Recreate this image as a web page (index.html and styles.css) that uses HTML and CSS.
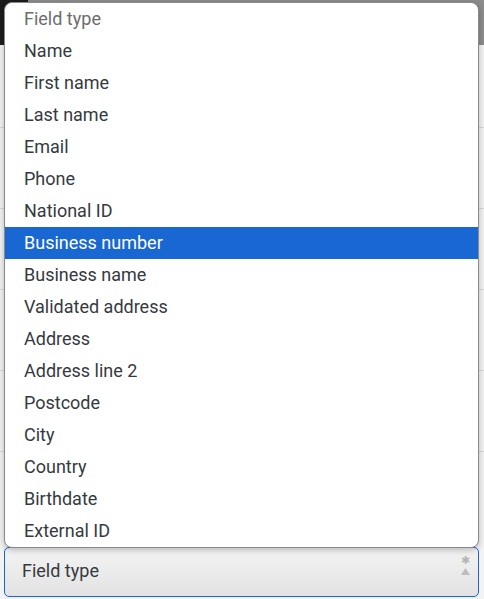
FILE: index.html
```html
<!DOCTYPE html>
<html lang="en">
<head>
    <meta charset="UTF-8">
    <meta name="viewport" content="width=device-width, initial-scale=1.0">
    <title>Field type</title>
    <link rel="stylesheet" href="styles.css">
</head>
<body>
    <div class="page">
        <div class="topbar">
            <div class="topbar-logo"></div>
        </div>
        <div class="rows">
            <div class="row"></div>
            <div class="row"></div>
            <div class="row"></div>
            <div class="row"></div>
            <div class="row"></div>
        </div>
        <div class="select">
            <span class="select-value">Field type</span>
            <span class="select-icons">
                <span class="required">&#10033;</span>
                <svg class="caret" width="9" height="7" viewBox="0 0 9 7"><path d="M4.5 0 L9 7 L0 7 Z" fill="#bdbdbd"/></svg>
            </span>
        </div>
    </div>

    <ul class="dropdown">
        <li class="option placeholder">Field type</li>
        <li class="option">Name</li>
        <li class="option">First name</li>
        <li class="option">Last name</li>
        <li class="option">Email</li>
        <li class="option">Phone</li>
        <li class="option">National ID</li>
        <li class="option selected">Business number</li>
        <li class="option">Business name</li>
        <li class="option">Validated address</li>
        <li class="option">Address</li>
        <li class="option">Address line 2</li>
        <li class="option">Postcode</li>
        <li class="option">City</li>
        <li class="option">Country</li>
        <li class="option">Birthdate</li>
        <li class="option">External ID</li>
    </ul>
</body>
</html>
```

FILE: styles.css
```css
* {
    margin: 0;
    padding: 0;
    box-sizing: border-box;
    font-family: Roboto, 'Liberation Sans', sans-serif;
}

body {
    width: 484px;
    height: 599px;
    overflow: hidden;
    background: #f3f3f3;
    position: relative;
}

.page {
    display: flex;
    flex-direction: column;
    height: 100%;
}

.topbar {
    height: 45px;
    background: #8c8c8c;
    display: flex;
}

.topbar-logo {
    width: 28px;
    height: 45px;
    background: #1c1c1c;
}

.rows {
    flex: 1;
    padding-top: 82px;
}

.row {
    height: 81px;
    border-top: 1px solid #d9d9d9;
}

.select {
    margin: 0 5px 2px 4px;
    height: 50px;
    border: 1px solid #1a66d9;
    border-radius: 5px;
    background: linear-gradient(#f4f4f4, #e2e2e2);
    display: flex;
    align-items: center;
    justify-content: space-between;
    padding: 0 8px 3px 17px;
}

.select-value {
    font-size: 18px;
    color: #353a40;
}

.select-icons {
    display: flex;
    flex-direction: column;
    align-items: center;
    gap: 2px;
    margin-top: -10px;
}

.required {
    font-size: 11px;
    line-height: 10px;
    color: #b5b5b5;
}

/* open list of the select */
.dropdown {
    position: absolute;
    top: 2px;
    left: 4px;
    width: 475px;
    list-style: none;
    background: #fff;
    border: 1px solid #8a8a8a;
    border-radius: 8px;
    box-shadow: 0 2px 6px rgba(0, 0, 0, 0.25);
    overflow: hidden;
}

.option {
    height: 32px;
    line-height: 32px;
    padding-left: 19px;
    font-size: 18px;
    color: #353a40;
}

.option.placeholder {
    color: #6d6d6d;
}

.option.selected {
    background: #1967d2;
    color: #fff;
}
```
